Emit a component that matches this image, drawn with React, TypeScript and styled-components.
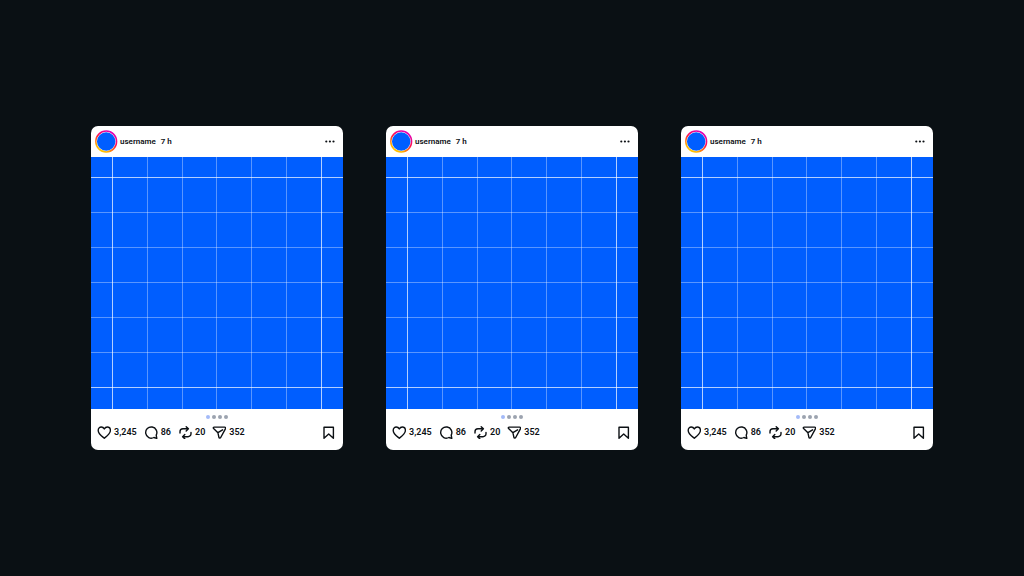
import React from "react";
import styled, { createGlobalStyle } from "styled-components";

const GlobalStyle = createGlobalStyle`
  * { box-sizing: border-box; }
  body { margin: 0; background: #0a1014; }
`;

const Page = styled.main`
  min-height: 100vh;
  display: flex;
  align-items: center;
  justify-content: center;
  padding: 24px;
  background: #0a1014;
  font-family: Roboto, "Liberation Sans", sans-serif;
`;

const Feed = styled.div`
  width: 100%;
  max-width: 842px;
  display: grid;
  grid-template-columns: repeat(3, minmax(0, 1fr));
  gap: 43px;
`;

const Card = styled.article`
  background: #fff;
  border-radius: 7px;
  overflow: hidden;
  color: #0c1014;
`;

const Header = styled.header`
  display: flex;
  align-items: center;
  height: 31px;
  padding: 0 6px 0 4px;
`;

const IconButton = styled.button`
  display: flex;
  align-items: center;
  padding: 0;
  border: 0;
  background: none;
  color: inherit;
  cursor: pointer;
`;

const Avatar = styled.svg`
  display: block;
  width: 23px;
  height: 23px;
  flex: none;
`;

const UserLink = styled.a`
  margin-left: 2px;
  color: inherit;
  font-size: 8px;
  line-height: 12px;
  font-weight: 600;
  text-decoration: none;
`;

const Age = styled.time`
  margin-left: 5px;
  font-size: 8px;
  line-height: 12px;
  font-weight: 600;
`;

const MoreButton = styled(IconButton)`
  margin-left: auto;
`;

const Artwork = styled.svg`
  display: block;
  width: 100%;
  aspect-ratio: 1;
  background: #005eff;
`;

const Footer = styled.footer`
  display: flex;
  flex-direction: column;
  height: 41px;
  padding: 6px 7px 0 6px;
  gap: 6px;
`;

const Dots = styled.div`
  display: flex;
  justify-content: center;
  gap: 2px;
`;

const Dot = styled.span<{ $active?: boolean }>`
  width: 4px;
  height: 4px;
  border-radius: 50%;
  background: ${(p) => (p.$active ? "#a3baf8" : "#9ca3af")};
`;

const Actions = styled.div`
  display: flex;
  align-items: center;
  gap: 7px;
`;

const Action = styled(IconButton)`
  gap: 3px;
  font-family: inherit;
  font-size: 9px;
  line-height: 14px;
  font-weight: 600;
`;

const SaveButton = styled(IconButton)`
  margin-left: auto;
`;

const Glyph = styled.svg`
  display: block;
  width: 14px;
  height: 14px;
  fill: none;
  stroke: currentColor;
  stroke-width: 1.4;
  stroke-linecap: round;
  stroke-linejoin: round;
`;

const glyphs = {
  heart: "M7.3 13.2C4.900 11.300 1.200 8.800 1.200 5.400 1.200 3.500 2.600 2 4.300 2c1.300 0 2.300.7 3 1.900.7-1.200 1.700-1.900 3-1.900 1.700 0 3.100 1.500 3.100 3.400 0 3.400-3.700 5.900-6.100 7.800Z",
  comment: "M12.800 13.400l-.6-3.200A5.600 5.600 0 1 0 9.900 12.500Z",
  repost: "M2 8V6.800a3 3 0 0 1 3-3h5.200M8.200 1.700l2.200 2.100-2.200 2.100M13 7.500v1.200a3 3 0 0 1-3 3H4.800M6.800 9.600l-2.200 2.100 2.200 2.100",
  share: "M2.200 2.100h10.400c.9 0 1.300.9.900 1.600L8.700 12.500c-.4.8-1.600.7-1.800-.2L5.900 7.700 1.600 3.600C1 3 1.400 2.100 2.200 2.100ZM5.900 7.700l4.700-2.900",
  save: "M2 2.300h9.400v10.900L6.700 9 2 13.200Z",
};

type GlyphName = keyof typeof glyphs;

const Icon = ({ name }: { name: GlyphName }) => (
  <Glyph viewBox="0 0 14 14" aria-hidden="true">
    <path d={glyphs[name]} />
  </Glyph>
);

const columns = [21.5, 56.5, 91.5, 125.5, 160.5, 195.5, 230.5];
const rows = [20.5, 55.5, 90.5, 125.5, 160.5, 195.5, 230.5];
const lineOpacity = (i: number) => (i === 0 || i === 6 ? 0.7 : 0.35);

const actions: { icon: GlyphName; label: string; count: string }[] = [
  { icon: "heart", label: "Like", count: "3,245" },
  { icon: "comment", label: "Comment", count: "86" },
  { icon: "repost", label: "Repost", count: "20" },
  { icon: "share", label: "Share", count: "352" },
];

const Post = ({ id }: { id: number }) => (
  <Card>
    <Header>
      <Avatar viewBox="0 0 23 23" aria-hidden="true">
        <defs>
          <radialGradient id={`ring-${id}`} cx="0.2" cy="1" r="1.1">
            <stop offset="0" stopColor="#ffc800" />
            <stop offset="0.35" stopColor="#ffb000" />
            <stop offset="0.6" stopColor="#ff5a20" />
            <stop offset="0.75" stopColor="#ff1050" />
            <stop offset="1" stopColor="#e000b8" />
          </radialGradient>
        </defs>
        <circle cx="11.2" cy="11.5" r="10.4" fill="none" stroke={`url(#ring-${id})`} strokeWidth="1.5" />
        <circle cx="11.2" cy="11.5" r="9.2" fill="#005eff" />
      </Avatar>
      <UserLink href="#profile">username</UserLink>
      <Age dateTime="PT7H">7 h</Age>
      <MoreButton type="button" aria-label="More options">
        <Glyph viewBox="0 0 14 14" aria-hidden="true">
          <g fill="currentColor" stroke="none">
            <circle cx="3.3" cy="6.5" r="1.1" />
            <circle cx="6.9" cy="6.5" r="1.1" />
            <circle cx="10.5" cy="6.5" r="1.1" />
          </g>
        </Glyph>
      </MoreButton>
    </Header>
    <Artwork viewBox="0 0 252 252" aria-hidden="true">
      <g stroke="#fff">
        {columns.map((x, i) => (
          <line key={x} x1={x} x2={x} y1="0" y2="252" strokeOpacity={lineOpacity(i)} />
        ))}
        {rows.map((y, i) => (
          <line key={y} x1="0" x2="252" y1={y} y2={y} strokeOpacity={lineOpacity(i)} />
        ))}
      </g>
    </Artwork>
    <Footer>
      <Dots>
        <Dot $active />
        <Dot />
        <Dot />
        <Dot />
      </Dots>
      <Actions>
        {actions.map((a) => (
          <Action key={a.icon} type="button" aria-label={`${a.label} ${a.count}`}>
            <Icon name={a.icon} />
            {a.count}
          </Action>
        ))}
        <SaveButton type="button" aria-label="Save">
          <Icon name="save" />
        </SaveButton>
      </Actions>
    </Footer>
  </Card>
);

export default function App() {
  return (
    <>
      <GlobalStyle />
      <Page>
        <Feed>
          {[1, 2, 3].map((id) => (
            <Post key={id} id={id} />
          ))}
        </Feed>
      </Page>
    </>
  );
}
